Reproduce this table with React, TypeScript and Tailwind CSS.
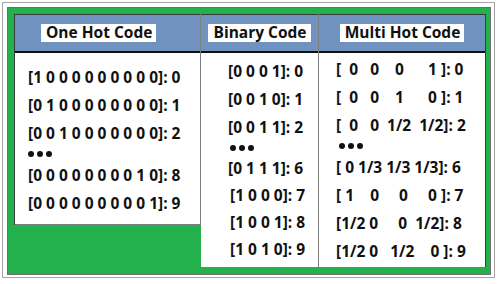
import React from 'react';

const oneHot = ['[1 0 0 0 0 0 0 0 0 0]: 0', '[0 1 0 0 0 0 0 0 0 0]: 1', '[0 0 1 0 0 0 0 0 0 0]: 2'];
const oneHotTail = ['[0 0 0 0 0 0 0 0 1 0]: 8', '[0 0 0 0 0 0 0 0 0 1]: 9'];

const binary = ['[0 0 0 1]: 0', '[0 0 1 0]: 1', '[0 0 1 1]: 2'];
const binaryTail = ['[0 1 1 1]: 6', '[1 0 0 0]: 7', '[1 0 0 1]: 8', '[1 0 1 0]: 9'];

const multi = ['[  0   0    0      1 ]: 0', '[  0   0    1      0 ]: 1', '[  0   0  1/2  1/2]: 2'];
const multiTail = ['[ 0 1/3 1/3 1/3]: 6', '[ 1    0     0     0 ]: 7', '[1/2 0     0  1/2]: 8', '[1/2 0   1/2    0 ]: 9'];

const Dots = () => (
    <div className="flex items-center gap-[3px] h-[14px]">
        <div className="w-[6px] h-[6px] rounded-full bg-[#111]" />
        <div className="w-[6px] h-[6px] rounded-full bg-[#111]" />
        <div className="w-[6px] h-[6px] rounded-full bg-[#111]" />
    </div>
);

const Label = ({ text }: { text: string }) => (
    <div className="bg-white h-[18px] pl-[5px] pr-[4px] flex items-center text-[15.5px] leading-none">{text}</div>
);

const Header = ({ children, className }: { children: React.ReactNode; className: string }) => (
    <div className={`h-[39px] bg-[#7092be] border-t border-t-[#3a3a3a] border-b-2 border-b-[#111] flex items-center ${className}`}>
        {children}
    </div>
);

export default function App() {
    return (
        <div
            className="w-[499px] h-[284px] bg-white pt-[2px] pl-[2px] text-[#111] font-bold"
            style={{ fontFamily: '"Open Sans", "Noto Sans", sans-serif' }}
        >
            <div className="w-[493px] h-[276px] border border-[#a3a3a3] p-[4px]">
                <div className="w-[484px] h-[268px] border border-[#6f6f6f] bg-[#22b14c] pt-[6px] pl-[6px]">
                    <div className="flex items-start w-[472px]">
                        {/* one hot */}
                        <div className="w-[187px] flex flex-col border-l border-l-[#3a3a3a] border-r border-r-[#7f7f7f]">
                            <Header className="pl-[26px]">
                                <Label text="One Hot Code" />
                            </Header>
                            <div className="h-[172px] bg-white border-b border-b-[#7f7f7f] pt-[10px] pl-[13px] text-[15.5px] leading-[28px] whitespace-pre">
                                {oneHot.map((t) => <div key={t}>{t}</div>)}
                                <Dots />
                                {oneHotTail.map((t) => <div key={t}>{t}</div>)}
                            </div>
                        </div>
                        {/* binary */}
                        <div className="w-[118px] flex flex-col border-r border-r-[#7f7f7f]">
                            <Header className="justify-center">
                                <Label text="Binary Code" />
                            </Header>
                            <div className="h-[214px] bg-white pt-[4px] pl-[27px] text-[15.5px] leading-[28px] whitespace-pre">
                                {binary.map((t) => <div key={t}>{t}</div>)}
                                <div className="pl-[2px]"><Dots /></div>
                                <div className="leading-[27px]">
                                    {binaryTail.map((t, i) => <div key={t} className={i > 0 ? 'pl-[2px]' : ''}>{t}</div>)}
                                </div>
                            </div>
                        </div>
                        {/* multi hot */}
                        <div className="w-[167px] flex flex-col border-r border-r-[#3a3a3a]">
                            <Header className="justify-center">
                                <Label text="Multi Hot Code" />
                            </Header>
                            <div className="h-[214px] bg-white pt-[2px] pl-[17px] text-[15.5px] leading-[28px] whitespace-pre">
                                {multi.map((t) => <div key={t}>{t}</div>)}
                                <div className="pl-[3px]"><Dots /></div>
                                {multiTail.map((t) => <div key={t}>{t}</div>)}
                            </div>
                        </div>
                    </div>
                </div>
            </div>
        </div>
    );
}
